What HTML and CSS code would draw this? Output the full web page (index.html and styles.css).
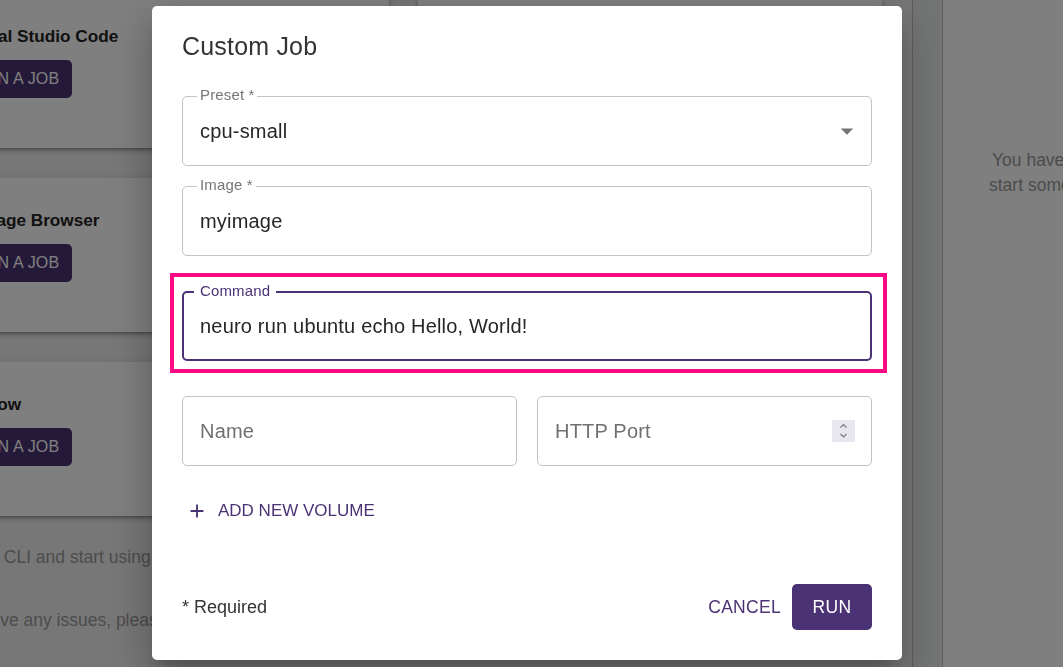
FILE: index.html
```html
<!DOCTYPE html>
<html lang="en">
<head>
<meta charset="utf-8">
<title>Custom Job</title>
<link rel="stylesheet" href="styles.css">
</head>
<body>
<div class="page">
  <main class="main">
    <div class="cards">
      <div class="card"><h3 class="card-title">Visual Studio Code</h3><button class="run-btn">Run a job</button></div>
      <div class="card"><h3 class="card-title">Jupyter Notebooks</h3><button class="run-btn">Run a job</button></div>
      <div class="card"><h3 class="card-title">Storage Browser</h3><button class="run-btn">Run a job</button></div>
      <div class="card"><h3 class="card-title">TensorBoard</h3><button class="run-btn">Run a job</button></div>
      <div class="card"><h3 class="card-title">MLflow</h3><button class="run-btn">Run a job</button></div>
      <div class="card"><h3 class="card-title">File Browser</h3><button class="run-btn">Run a job</button></div>
    </div>
    <p class="hint hint-first">Install the CLI and start using</p>
    <p class="hint hint-second">If you have any issues, please</p>
  </main>
  <div class="strip"></div>
  <aside class="panel">
    <p class="panel-line">You have no jobs running.</p>
    <p class="panel-line panel-line-2">start some job to see it here</p>
  </aside>
</div>

<div class="backdrop"></div>

<div class="modal">
  <div class="dialog">
    <h2 class="dialog-title">Custom Job</h2>

    <div class="field field-preset">
      <span class="field-label">Preset *</span>
      <span class="field-value">cpu-small</span>
      <svg class="select-arrow" width="30" height="30" viewBox="0 0 24 24"><path d="M7 10l5 5 5-5z" fill="#757575"/></svg>
    </div>

    <div class="field field-image">
      <span class="field-label">Image *</span>
      <span class="field-value">myimage</span>
    </div>

    <div class="field field-command">
      <span class="field-label">Command</span>
      <span class="field-value">neuro run ubuntu echo Hello, World!</span>
    </div>

    <div class="field-row">
      <div class="field">
        <span class="field-placeholder">Name</span>
      </div>
      <div class="field">
        <span class="field-placeholder">HTTP Port</span>
        <svg class="spinner" width="23" height="22" viewBox="0 0 23 22">
          <rect width="23" height="22" fill="#e8e6ee"/>
          <polyline points="8.5,7.5 11.5,4.5 14.5,7.5" fill="none" stroke="#7a7a7a" stroke-width="1.2"/>
          <polyline points="8.5,14 11.5,17 14.5,14" fill="none" stroke="#7a7a7a" stroke-width="1.2"/>
        </svg>
      </div>
    </div>

    <button class="add-volume">
      <svg width="22" height="22" viewBox="0 0 24 24"><path d="M19 13h-6v6h-2v-6H5v-2h6V5h2v6h6v2z" fill="#4a3275"/></svg>
      <span>Add new volume</span>
    </button>

    <div class="dialog-footer">
      <span class="required">* Required</span>
      <div class="actions">
        <button class="btn-cancel">Cancel</button>
        <button class="btn-run">Run</button>
      </div>
    </div>
  </div>
</div>
</body>
</html>
```

FILE: styles.css
```css
html, body {
  margin: 0;
  padding: 0;
}

body {
  width: 1063px;
  height: 667px;
  overflow: hidden;
  font-family: "Liberation Sans", Arial, sans-serif;
  background: #efefef;
}

/* ---------- background page ---------- */
.page {
  display: flex;
  height: 673px;
  margin-top: -6px;
  background: #efefef;
}

.main {
  flex: none;
  width: 958px;
  margin-left: -106px;
  padding: 0 30px;
}

.cards {
  display: grid;
  grid-template-columns: 1fr 1fr;
  column-gap: 29px;
  row-gap: 30px;
}

.card {
  height: 154px;
  box-sizing: border-box;
  padding: 30px 0 0 38px;
  background: #fff;
  border-radius: 5px;
  box-shadow: 0 3px 3px -2px rgba(0,0,0,.25), 0 3px 4px 0 rgba(0,0,0,.16), 0 1px 8px 0 rgba(0,0,0,.12);
}

.card-title {
  margin: 0;
  font-size: 17.2px;
  line-height: 24px;
  font-weight: bold;
  color: #222;
}

.run-btn {
  display: block;
  margin-top: 12px;
  height: 38px;
  padding: 0 13px 0 12px;
  border: none;
  border-radius: 5px;
  background: #4a3275;
  color: #fff;
  font-family: inherit;
  font-size: 16px;
  letter-spacing: .2px;
  text-transform: uppercase;
}

.hint {
  margin: 0;
  font-size: 17.5px;
  line-height: 26px;
  color: #999;
  white-space: nowrap;
}

.hint-first {
  margin-top: 28px;
}

.hint-second {
  margin-top: 37px;
  padding-left: 9px;
}

.strip {
  flex: none;
  width: 29px;
  background: #e7ebe9;
  border-left: 1px solid #bcbcbc;
  border-right: 1px solid #bcbcbc;
}

.panel {
  flex: 1;
  background: #fff;
  padding: 154px 0 0 49px;
}

.panel-line {
  margin: 0;
  font-size: 17.5px;
  line-height: 25px;
  color: #999;
  white-space: nowrap;
}

.panel-line-2 {
  margin-left: -3px;
}

/* ---------- overlay ---------- */
.backdrop {
  position: fixed;
  inset: 0;
  background: rgba(0, 0, 0, .5);
}

.modal {
  position: fixed;
  inset: 0;
  display: flex;
  align-items: flex-start;
  padding: 6px 0 0 152px;
}

.dialog {
  width: 750px;
  height: 654px;
  box-sizing: border-box;
  padding: 24px 30px 30px;
  background: #fff;
  border-radius: 5px;
  display: flex;
  flex-direction: column;
  box-shadow: 0 11px 15px -7px rgba(0,0,0,.2), 0 24px 38px 3px rgba(0,0,0,.14), 0 9px 46px 8px rgba(0,0,0,.12);
}

.dialog-title {
  margin: 0;
  font-size: 25px;
  line-height: 32px;
  font-weight: normal;
  letter-spacing: .19px;
  color: #333;
}

.field {
  position: relative;
  height: 70px;
  box-sizing: border-box;
  border: 1px solid #c4c4c4;
  border-radius: 5px;
  display: flex;
  align-items: center;
  padding: 0 17px;
  font-size: 20px;
  letter-spacing: .19px;
}

.field-preset {
  margin-top: 34px;
}

.field-image {
  margin-top: 20px;
}

.field-command {
  margin-top: 35px;
  border: 2px solid #4a3275;
  padding: 0 16px;
}

.field-command::after {
  content: "";
  position: absolute;
  top: -20px;
  left: -14px;
  right: -17px;
  bottom: -14px;
  border: 4px solid #fb0a83;
}

.field-label {
  position: absolute;
  top: -10px;
  left: 14px;
  padding: 0 3px;
  background: #fff;
  font-size: 15px;
  line-height: 16px;
  letter-spacing: .14px;
  color: #757575;
}

.field-command .field-label {
  left: 10px;
  padding: 0 6px;
  color: #4a3275;
}

.field-value {
  color: #262626;
}

.field-placeholder {
  color: #707070;
}

.select-arrow {
  margin-left: auto;
  margin-right: -8px;
}

.spinner {
  margin-left: auto;
  margin-right: -1px;
}

.field-row {
  display: grid;
  grid-template-columns: 1fr 1fr;
  column-gap: 20px;
  margin-top: 35px;
}

.add-volume {
  align-self: flex-start;
  display: flex;
  align-items: center;
  gap: 10px;
  height: 40px;
  margin-top: 25px;
  padding: 0 0 0 4px;
  border: none;
  background: none;
  font-family: inherit;
  font-size: 17px;
  color: #4a3275;
  text-transform: uppercase;
}

.dialog-footer {
  margin-top: auto;
  display: flex;
  align-items: center;
  justify-content: space-between;
}

.required {
  font-size: 18px;
  color: #333;
}

.actions {
  display: flex;
  align-items: center;
  gap: 11px;
}

.btn-cancel {
  border: none;
  background: none;
  padding: 0;
  font-family: inherit;
  font-size: 17.5px;
  letter-spacing: .3px;
  color: #4a3275;
  text-transform: uppercase;
}

.btn-run {
  width: 80px;
  height: 46px;
  border: none;
  border-radius: 5px;
  background: #4a3275;
  color: #fff;
  font-family: inherit;
  font-size: 17.5px;
  letter-spacing: .3px;
  text-transform: uppercase;
}
```
